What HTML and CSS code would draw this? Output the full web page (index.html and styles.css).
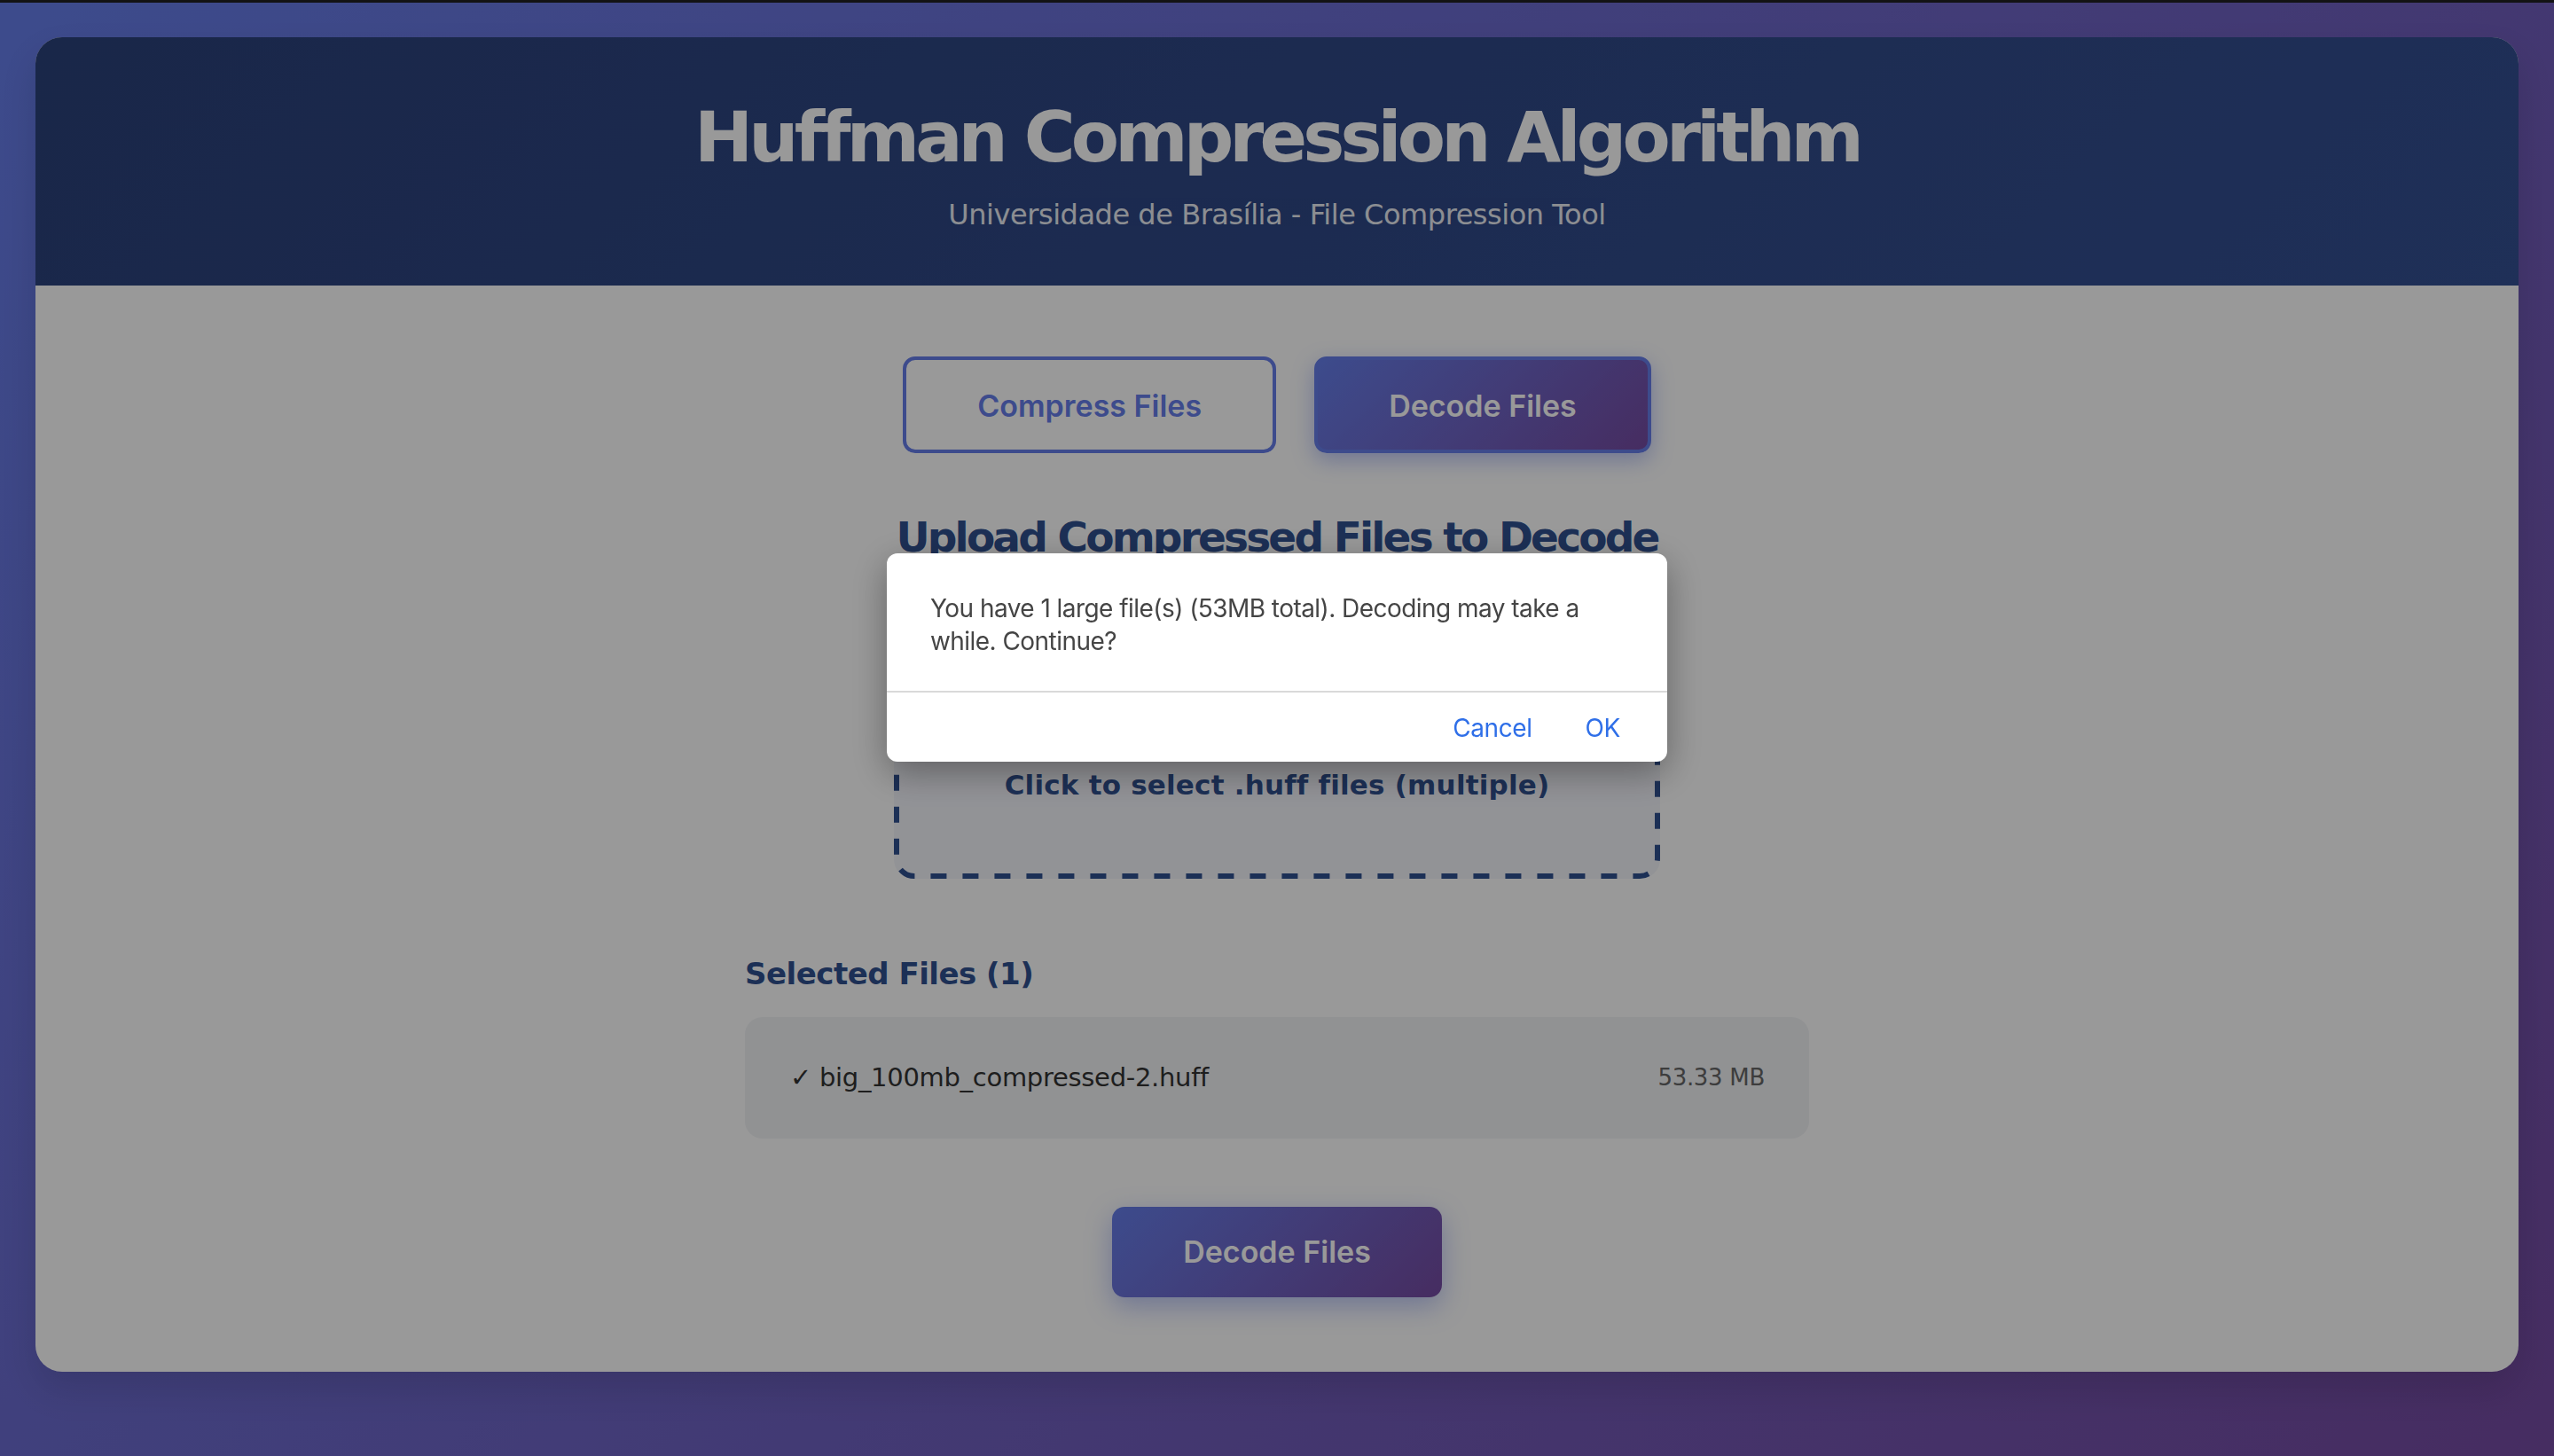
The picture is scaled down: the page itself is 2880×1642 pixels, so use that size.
FILE: index.html
```html
<!DOCTYPE html>
<html lang="en">
<head>
<meta charset="utf-8">
<title>Huffman Compression Algorithm</title>
<link rel="stylesheet" href="styles.css">
</head>
<body>
  <div class="container">
    <header class="header">
      <h1 class="title">Huffman Compression Algorithm</h1>
      <p class="subtitle">Universidade de Brasília - File Compression Tool</p>
    </header>
    <main class="content">
      <div class="tabs">
        <button class="tab">Compress Files</button>
        <button class="tab active">Decode Files</button>
      </div>
      <section class="upload-section">
        <h2 class="upload-title">Upload Compressed Files to Decode</h2>
        <label class="drop-zone">
          <svg class="drop-border" aria-hidden="true"><rect class="drop-border-rect"/></svg>
          <span class="drop-icon">
            <svg viewBox="0 0 24 24" width="80" height="80" fill="none" stroke="currentColor" stroke-width="2" stroke-linecap="round" stroke-linejoin="round"><path d="M21 15v4a2 2 0 0 1-2 2H5a2 2 0 0 1-2-2v-4"/><path d="M17 8l-5-5-5 5"/><path d="M12 3v12"/></svg>
          </span>
          <span class="drop-text">Click to select .huff files (multiple)</span>
        </label>
      </section>
      <section class="selected">
        <h3 class="selected-title">Selected Files (1)</h3>
        <div class="file-list">
          <div class="file-item">
            <span class="file-name"><span class="check">✓</span> big_100mb_compressed-2.huff</span>
            <span class="file-size">53.33 MB</span>
          </div>
        </div>
      </section>
      <div class="actions">
        <button class="primary-btn">Decode Files</button>
      </div>
    </main>
  </div>

  <div class="backdrop"></div>
  <div class="dialog" role="alertdialog">
    <p class="dialog-message">You have 1 large file(s) (53MB total). Decoding may take a while. Continue?</p>
    <div class="dialog-actions">
      <button class="dialog-btn">Cancel</button>
      <button class="dialog-btn">OK</button>
    </div>
  </div>
</body>
</html>
```

FILE: styles.css
```css
html {
  height: 100%;
}

body {
  margin: 0;
  min-height: 100%;
  box-sizing: border-box;
  border-top: 3px solid #202022;
  padding: 39px 40px 0;
  background: linear-gradient(135deg, #667eea 0%, #764ba2 100%);
  font-family: "DejaVu Sans", Verdana, sans-serif;
}

.container {
  background: #ffffff;
  border-radius: 30px;
  overflow: hidden;
  box-shadow: 0 20px 40px rgba(0, 0, 0, 0.12);
}

.header {
  background: linear-gradient(135deg, #2b417a 0%, #345093 100%);
  color: #ffffff;
  text-align: center;
  padding: 66px 40px 61px;
}

.title {
  margin: 0;
  font-size: 79px;
  line-height: 95px;
  font-weight: bold;
  letter-spacing: -4.85px;
}

.subtitle {
  margin: 20px 0 0;
  font-size: 32px;
  line-height: 38px;
  letter-spacing: -0.46px;
  opacity: 0.9;
}

.content {
  padding: 80px 80px 84px;
}

.tabs {
  display: flex;
  justify-content: center;
  gap: 43px;
  margin-bottom: 67px;
}

.tab {
  font-family: Inter, "Noto Sans", sans-serif;
  font-size: 34px;
  font-weight: 600;
  line-height: 41px;
  padding: 31px 80px 29px;
  border: 4px solid #667eea;
  border-radius: 14px;
  background: #ffffff;
  color: #667eea;
  cursor: pointer;
}

.tab.active {
  background: linear-gradient(135deg, #667eea 0%, #764ba2 100%);
  color: #ffffff;
  box-shadow: 0 8px 24px rgba(102, 126, 234, 0.45);
}

.upload-section {
  display: flex;
  flex-direction: column;
  align-items: center;
}

.upload-title {
  margin: 0;
  font-size: 47px;
  line-height: 55px;
  font-weight: bold;
  letter-spacing: -2.83px;
  color: #30508f;
}

.drop-zone {
  position: relative;
  margin-top: 30px;
  width: 864px;
  box-sizing: border-box;
  border-radius: 22px;
  background: #f4f5fb;
  padding: 86px 40px 87px;
  display: flex;
  flex-direction: column;
  align-items: center;
  color: #30508f;
  cursor: pointer;
}

.drop-border {
  position: absolute;
  inset: 0;
  width: 100%;
  height: 100%;
  pointer-events: none;
}

.drop-border-rect {
  x: 3px;
  y: 3px;
  width: calc(100% - 6px);
  height: calc(100% - 6px);
  rx: 20px;
  fill: none;
  stroke: #30508f;
  stroke-width: 6px;
  stroke-dasharray: 18 18;
}

.drop-icon {
  display: block;
  width: 80px;
  height: 80px;
  margin-bottom: 38px;
}

.drop-text {
  font-size: 31px;
  line-height: 37px;
  font-weight: bold;
  letter-spacing: 0.2px;
}

.selected {
  max-width: 1200px;
  margin: 87px auto 0;
}

.selected-title {
  margin: 0 0 29px;
  font-size: 34px;
  line-height: 40px;
  font-weight: bold;
  letter-spacing: -0.5px;
  color: #30508f;
}

.file-list {
  background: #f2f3f6;
  border-radius: 20px;
  padding: 20px;
}

.file-item {
  display: flex;
  justify-content: space-between;
  align-items: center;
  padding: 30px 30px 30px 31px;
  line-height: 37px;
}

.file-name {
  font-size: 29px;
  color: #333333;
  letter-spacing: -0.3px;
}

.check {
  font-weight: bold;
}

.file-size {
  font-size: 26px;
  color: #666666;
  letter-spacing: -0.3px;
}

.actions {
  display: flex;
  justify-content: center;
  margin-top: 77px;
}

.primary-btn {
  font-family: Inter, "Noto Sans", sans-serif;
  font-size: 34px;
  font-weight: 600;
  line-height: 42px;
  padding: 30px 80px;
  border: none;
  border-radius: 14px;
  background: linear-gradient(135deg, #667eea 0%, #764ba2 100%);
  color: #ffffff;
  box-shadow: 0 10px 30px rgba(102, 126, 234, 0.45);
  cursor: pointer;
}

.backdrop {
  position: fixed;
  inset: 0;
  background: rgba(0, 0, 0, 0.4);
}

.dialog {
  position: fixed;
  top: 624px;
  left: 50%;
  width: 880px;
  margin-left: -440px;
  background: #ffffff;
  border-radius: 12px;
  box-shadow: 0 12px 40px rgba(0, 0, 0, 0.35);
  font-family: Inter, "Noto Sans", sans-serif;
}

.dialog-message {
  margin: 0;
  padding: 44px 49px 37px;
  font-size: 28px;
  line-height: 37px;
  letter-spacing: -0.55px;
  color: #454545;
  border-bottom: 2px solid #d9d9d9;
}

.dialog-actions {
  display: flex;
  justify-content: flex-end;
  align-items: center;
  gap: 60px;
  height: 78px;
  box-sizing: border-box;
  padding: 3px 53px 0;
}

.dialog-btn {
  font-family: Inter, "Noto Sans", sans-serif;
  font-size: 28px;
  line-height: 37px;
  letter-spacing: -0.4px;
  padding: 0;
  border: none;
  background: none;
  color: #2f6fe8;
  cursor: pointer;
}
```
